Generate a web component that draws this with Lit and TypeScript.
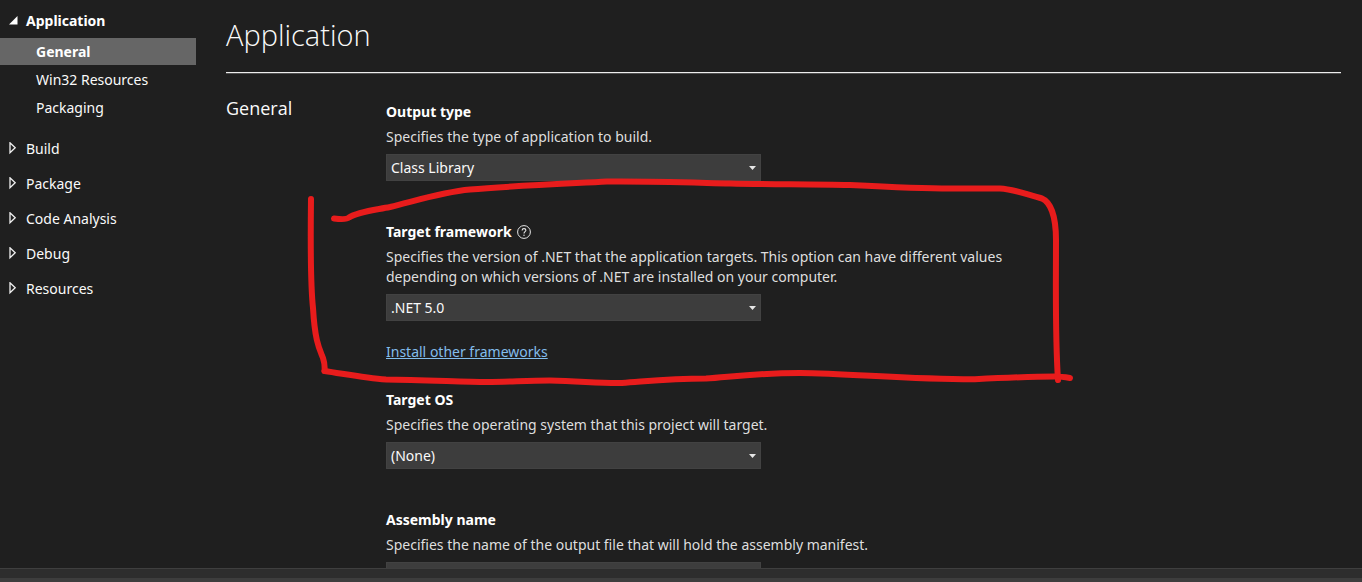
import { LitElement, html, css, svg, nothing } from "lit";
import { customElement, property, state } from "lit/decorators.js";
import { classMap } from "lit/directives/class-map.js";

interface NavGroup {
  name: string;
  items: string[];
}

interface Field {
  id: string;
  label: string;
  description: string;
  kind: "select" | "text";
  options?: string[];
  help?: boolean;
  link?: string;
}

const NAV: NavGroup[] = [
  { name: "Application", items: ["General", "Win32 Resources", "Packaging"] },
  { name: "Build", items: [] },
  { name: "Package", items: [] },
  { name: "Code Analysis", items: [] },
  { name: "Debug", items: [] },
  { name: "Resources", items: [] },
];

const FIELDS: Field[] = [
  {
    id: "output-type",
    label: "Output type",
    description: "Specifies the type of application to build.",
    kind: "select",
    options: ["Class Library"],
  },
  {
    id: "target-framework",
    label: "Target framework",
    description:
      "Specifies the version of .NET that the application targets. This option can have different values depending on which versions of .NET are installed on your computer.",
    kind: "select",
    options: [".NET 5.0"],
    help: true,
    link: "Install other frameworks",
  },
  {
    id: "target-os",
    label: "Target OS",
    description: "Specifies the operating system that this project will target.",
    kind: "select",
    options: ["(None)"],
  },
  {
    id: "assembly-name",
    label: "Assembly name",
    description: "Specifies the name of the output file that will hold the assembly manifest.",
    kind: "text",
  },
];

@customElement("settings-nav")
export class SettingsNav extends LitElement {
  @state() private open = "Application";
  @state() private current = "General";

  static styles = css`
    :host {
      display: block;
      padding-top: 3px;
    }
    ul {
      list-style: none;
      margin: 0;
      padding: 0;
    }
    .group {
      display: flex;
      align-items: center;
      gap: 8px;
      width: 100%;
      height: 35px;
      padding: 0 0 0 8px;
      border: 0;
      background: none;
      color: #fafafa;
      font: inherit;
      text-align: left;
    }
    .group.open {
      font-weight: 700;
      color: #fff;
    }
    .arrow {
      width: 10px;
      height: 14px;
      flex: none;
    }
    .sub {
      display: flex;
      flex-direction: column;
      gap: 1px;
      padding-bottom: 10px;
    }
    .item {
      display: block;
      line-height: 27px;
      padding-left: 36px;
      color: #fafafa;
      text-decoration: none;
    }
    .item.current {
      background: #666;
      color: #fff;
      font-weight: 700;
    }
  `;

  render() {
    return html`<nav aria-label="Property pages">
      <ul>
        ${NAV.map((g) => {
          const open = g.name === this.open;
          return html`<li>
            <button
              class=${classMap({ group: true, open })}
              aria-expanded=${open}
              @click=${() => (this.open = open ? "" : g.name)}
            >
              <svg class="arrow" viewBox="0 0 10 14" aria-hidden="true">
                ${open
                  ? svg`<path d="M9.5 2v8.500H1z" fill="#fff" />`
                  : svg`<path d="M2 .8v10L7.200 5.800z" fill="none" stroke="#f0f0f0" stroke-width="1.3" />`}
              </svg>
              <span>${g.name}</span>
            </button>
            ${open && g.items.length
              ? html`<ul class="sub">
                  ${g.items.map(
                    (i) => html`<li>
                      <a
                        href="#"
                        class=${classMap({ item: true, current: i === this.current })}
                        @click=${(e: Event) => {
                          e.preventDefault();
                          this.current = i;
                        }}
                        >${i}</a
                      >
                    </li>`
                  )}
                </ul>`
              : nothing}
          </li>`;
        })}
      </ul>
    </nav>`;
  }
}

@customElement("settings-field")
export class SettingsField extends LitElement {
  @property({ attribute: false }) field!: Field;

  static styles = css`
    :host {
      display: block;
    }
    .head {
      display: flex;
      align-items: center;
      gap: 5px;
      line-height: 20px;
      margin-bottom: 5px;
    }
    label {
      font-weight: 700;
      color: #fff;
    }
    .help {
      display: flex;
      padding: 0;
      border: 0;
      background: none;
    }
    .help svg {
      width: 14px;
      height: 14px;
    }
    p {
      margin: 0 0 7px;
      max-width: 640px;
      line-height: 20px;
      color: #dedede;
    }
    .box {
      display: grid;
      max-width: 375px;
    }
    .box > * {
      grid-area: 1 / 1;
    }
    .control {
      box-sizing: border-box;
      width: 100%;
      height: 27px;
      margin: 0;
      padding: 0 24px 0 4px;
      border: 1px solid #424242;
      border-radius: 0;
      background: #3d3d3d;
      color: #fafafa;
      font: inherit;
      appearance: none;
    }
    .caret {
      width: 7px;
      height: 4px;
      justify-self: end;
      align-self: center;
      margin-right: 5px;
      pointer-events: none;
    }
    a {
      display: inline-block;
      margin-top: 21px;
      line-height: 20px;
      color: #83bdec;
      text-underline-offset: 1px;
    }
  `;

  render() {
    const f = this.field;
    return html`
      <div class="head">
        <label for=${f.id}>${f.label}</label>
        ${f.help
          ? html`<button class="help" aria-label="Help">
              <svg viewBox="0 0 14 14" fill="none" stroke="#e6e6e6" aria-hidden="true">
                <circle cx="7" cy="7" r="6.4" />
                <path
                  d="M5.1 5.5C5.1 4.3 5.9 3.6 7 3.6s1.9.7 1.9 1.7C8.900 6.600 7 6.700 7 8.400"
                  stroke-width="1.100"
                />
                <circle cx="7" cy="10.200" r=".7" fill="#e6e6e6" stroke="none" />
              </svg>
            </button>`
          : nothing}
      </div>
      <p id="about">${f.description}</p>
      <div class="box">
        ${f.kind === "select"
          ? html`<select class="control" id=${f.id} aria-describedby="about">
                ${f.options?.map((o) => html`<option>${o}</option>`)}
              </select>
              <svg class="caret" viewBox="0 0 7 4" aria-hidden="true">
                <path d="M0 0h7L3.500 4z" fill="#e6e6e6" />
              </svg>`
          : html`<input class="control" id=${f.id} type="text" aria-describedby="about" />`}
      </div>
      ${f.link ? html`<a href="#">${f.link}</a>` : nothing}
    `;
  }
}

@customElement("app-root")
export class AppRoot extends LitElement {
  static styles = css`
    :host {
      display: flex;
      flex-direction: column;
      position: relative;
      height: 100vh;
      overflow: hidden;
      background: #1f1f1f;
      color: #fafafa;
      font: 14px "Noto Sans", "Open Sans", sans-serif;
    }
    .body {
      flex: 1;
      min-height: 0;
      display: grid;
      grid-template-columns: 196px 1fr;
      overflow: hidden;
    }
    main {
      padding: 15px 21px 0 30px;
    }
    h1 {
      margin: 0 0 20px;
      padding-bottom: 17px;
      border-bottom: 1px solid #ededed;
      box-shadow: 0 1px #505050;
      font-size: 29px;
      line-height: 40px;
      font-weight: 300;
    }
    h1,
    h2 {
      font-family: "Open Sans", "Noto Sans", sans-serif;
    }
    section {
      display: grid;
      grid-template-columns: 160px 1fr;
    }
    h2 {
      margin: 0;
      font-size: 18px;
      line-height: 30px;
      font-weight: 400;
    }
    .fields {
      display: flex;
      flex-direction: column;
      padding-top: 9px;
    }
    .field {
      margin-bottom: 41px;
    }
    .field.linked {
      margin-bottom: 28px;
    }
    footer {
      flex: none;
      height: 4px;
      border-top: 9px solid #2d2d2d;
      background: #3d3d3d;
      outline: 1px solid #3f3f3f;
    }
    .ink {
      position: absolute;
      top: 0;
      left: 0;
      pointer-events: none;
    }
  `;

  render() {
    return html`
      <div class="body">
        <settings-nav></settings-nav>
        <main>
          <h1>Application</h1>
          <section>
            <h2>General</h2>
            <div class="fields">
              ${FIELDS.map(
                (f) => html`<settings-field
                  class=${classMap({ field: true, linked: !!f.link })}
                  .field=${f}
                ></settings-field>`
              )}
            </div>
          </section>
        </main>
      </div>
      <footer></footer>
      <svg
        class="ink"
        width="1100"
        height="400"
        viewBox="0 0 1100 400"
        fill="none"
        stroke="#e81c1c"
        stroke-width="6"
        stroke-linecap="round"
        stroke-linejoin="round"
        aria-hidden="true"
      >
        <path d="M311 199C310.500 240 310 280 313 308C315 343 320 350 323 358C325 364 325 366 324.500 371" />
        <path
          d="M324.500 371C345 374 365 378 386 379.500C420 380 460 381.500 487 382C510 382 525 380.500 550 380.500C580 381 600 383.500 622 383C650 381 670 378.500 706 378.500C730 377 755 373 800 373C850 373.500 910 379.500 975 379.300C1000 378 1030 376.500 1055 376.500C1061 376.500 1064 377 1070 378"
        />
        <path
          d="M334 218.500C342 219.500 347 219.500 349 217.500C358 211.500 375 210 390 207C420 199.500 443 192 470 189.500C510 186 570 183.500 607 181.500C650 181 690 182.500 730 183.500C770 184.500 810 184 850 185C890 187 930 188.500 950 188.500H1000C1014 189 1028 195 1042 198.500C1050 202 1056 215 1056 240C1056 290 1055 335 1058 380"
        />
      </svg>
    `;
  }
}
